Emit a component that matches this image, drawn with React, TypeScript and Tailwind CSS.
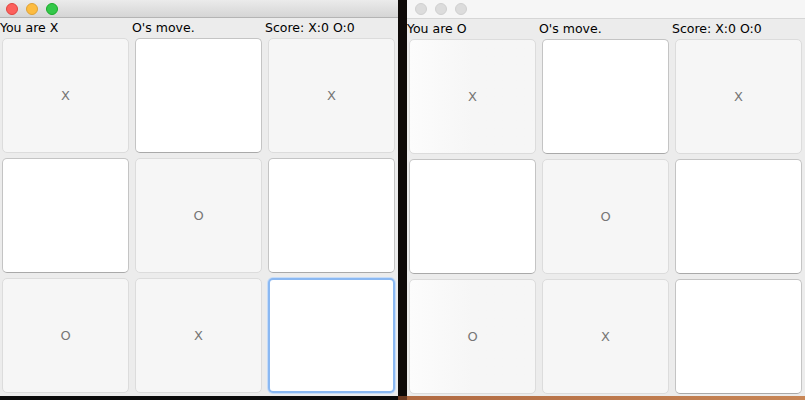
const boards = [
  {
    you: "You are X",
    active: true,
    cells: ["X", "", "X", "", "O", "", "O", "X", ""],
    focus: 8,
  },
  {
    you: "You are O",
    active: false,
    cells: ["X", "", "X", "", "O", "", "O", "X", ""],
    focus: -1,
  },
];

const font = { fontFamily: '"DejaVu Sans", "Liberation Sans", sans-serif' };

function TitleBar({ active }: { active: boolean }) {
  return (
    <div
      className={
        active
          ? "flex h-[18px] items-center gap-[8px] border-b border-[#b4b4b4] bg-gradient-to-b from-[#ebebeb] to-[#d5d5d5] pl-[6px]"
          : "flex h-[19px] items-center gap-[8px] border-b border-[#d6d6d6] bg-[#f6f6f6] pl-[8px]"
      }
    >
      {active ? (
        <>
          <span className="h-[12px] w-[12px] rounded-full border border-[#e0443e] bg-[#fc605c]" />
          <span className="h-[12px] w-[12px] rounded-full border border-[#dea236] bg-[#fdbc40]" />
          <span className="h-[12px] w-[12px] rounded-full border border-[#1aab29] bg-[#34c84a]" />
        </>
      ) : (
        <>
          <span className="h-[12px] w-[12px] rounded-full border border-[#d0d0d0] bg-[#dcdcdc]" />
          <span className="h-[12px] w-[12px] rounded-full border border-[#d0d0d0] bg-[#dcdcdc]" />
          <span className="h-[12px] w-[12px] rounded-full border border-[#d0d0d0] bg-[#dcdcdc]" />
        </>
      )}
    </div>
  );
}

function Cell({ mark, focused, shaded }: { mark: string; focused: boolean; shaded: boolean }) {
  if (focused) {
    return (
      <div className="rounded-[5px] border-2 border-[#8ab8f2] bg-white shadow-[0_0_0_1px_#c6dcf8]" />
    );
  }
  if (mark) {
    return (
      <div
        className={
          shaded
            ? "flex items-center justify-center rounded-[5px] border border-[#dcdcdc] bg-gradient-to-r from-[#fcfcfc] via-[#f6f6f6] to-[#f6f6f6] text-[13px] text-[#767676]"
            : "flex items-center justify-center rounded-[5px] border border-[#dcdcdc] bg-[#f6f6f6] text-[13px] text-[#767676]"
        }
      >
        {mark}
      </div>
    );
  }
  return (
    <div className="rounded-[5px] border border-[#c4c4c4] border-b-[#a9a9a9] bg-white" />
  );
}

function Window({ b }: { b: (typeof boards)[number] }) {
  return (
    <div className="flex h-[396px] w-[398px] flex-col bg-[#ececec]" style={font}>
      <TitleBar active={b.active} />
      <div className="flex h-[19px] items-center pt-[1px] text-[12.5px] text-black">
        <span className="w-[132px]">{b.you}</span>
        <span className="w-[133px]">O's move.</span>
        <span>Score: X:0 O:0</span>
      </div>
      <div className="grid grid-cols-[127px_127px_127px] grid-rows-[115px_115px_115px] gap-x-[6px] gap-y-[5px] pl-[2px] pt-[1px]">
        {b.cells.map((m, i) => (
          <Cell key={i} mark={m} focused={i === b.focus} shaded={!b.active && i % 3 === 0} />
        ))}
      </div>
    </div>
  );
}

export default function App() {
  return (
    <div className="flex h-[400px] w-[805px] overflow-hidden bg-black">
      <div className="flex flex-col">
        <Window b={boards[0]} />
        <div className="h-[4px] bg-[#0b0b0b]" />
      </div>
      <div className="flex w-[9px] flex-col">
        <div className="h-[396px] bg-[#0e0a08]" />
        <div className="h-[4px] bg-[#6a3a22]" />
      </div>
      <div className="flex flex-col">
        <Window b={boards[1]} />
        <div className="h-[4px] bg-gradient-to-r from-[#b06a42] to-[#c88656]" />
      </div>
    </div>
  );
}
